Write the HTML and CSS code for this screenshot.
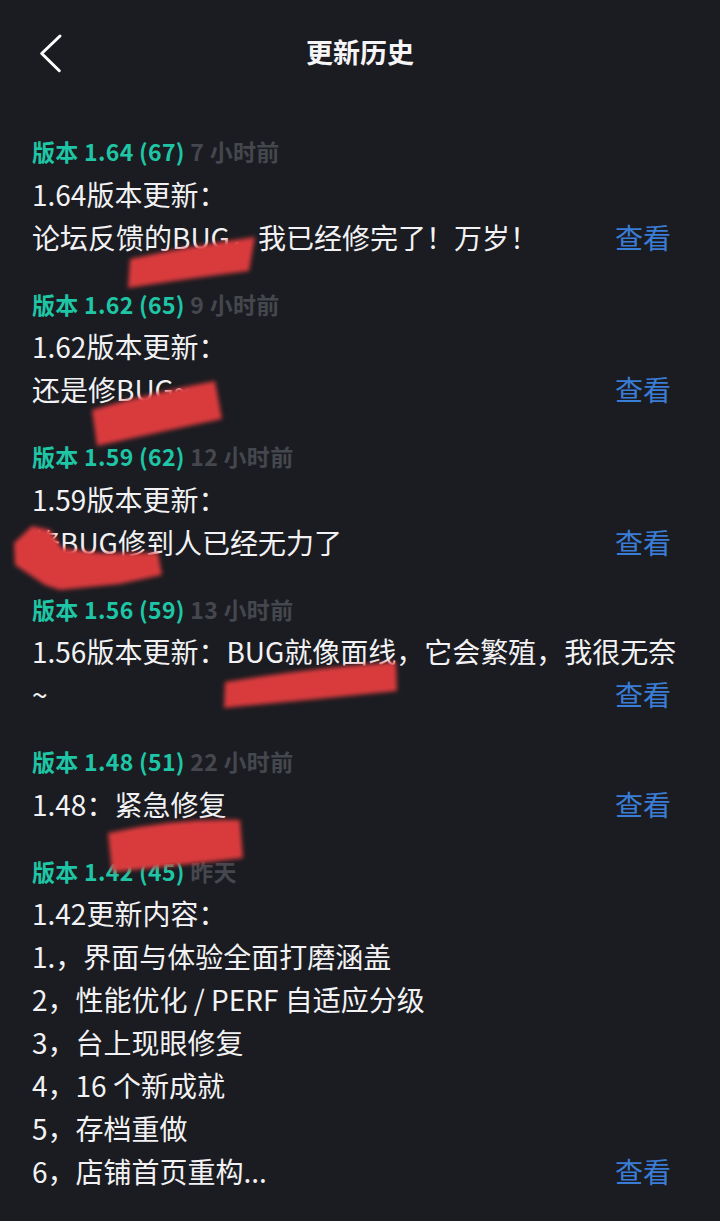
FILE: index.html
```html
<!DOCTYPE html>
<html lang="zh-CN">
<head>
<meta charset="utf-8">
<title>更新历史</title>
<link rel="stylesheet" href="styles.css">
</head>
<body>
<div class="page">
  <header class="topbar">
    <button class="back" aria-label="返回">
      <svg width="28" height="44" viewBox="0 0 28 44"><path d="M24 6 L5.7 23.5 L23.3 40.7" fill="none" stroke="#ffffff" stroke-width="3" stroke-linecap="round" stroke-linejoin="round"/></svg>
    </button>
    <h1 class="title">更新历史</h1>
    <span></span>
  </header>

  <main class="list">
    <section class="entry">
      <div class="entry-head"><span class="ver">版本 1.64 (67)</span> <span class="time">7 小时前</span></div>
      <div class="entry-body">1.64版本更新：<br>论坛反馈的BUG，我已经修完了！万岁！<a class="view">查看</a></div>
    </section>
    <section class="entry">
      <div class="entry-head"><span class="ver">版本 1.62 (65)</span> <span class="time">9 小时前</span></div>
      <div class="entry-body">1.62版本更新：<br>还是修BUG~<a class="view">查看</a></div>
    </section>
    <section class="entry">
      <div class="entry-head"><span class="ver">版本 1.59 (62)</span> <span class="time">12 小时前</span></div>
      <div class="entry-body">1.59版本更新：<br>修BUG修到人已经无力了<a class="view">查看</a></div>
    </section>
    <section class="entry">
      <div class="entry-head"><span class="ver">版本 1.56 (59)</span> <span class="time">13 小时前</span></div>
      <div class="entry-body">1.56版本更新：BUG就像面线，它会繁殖，我很无奈~<a class="view">查看</a></div>
    </section>
    <section class="entry">
      <div class="entry-head"><span class="ver">版本 1.48 (51)</span> <span class="time">22 小时前</span></div>
      <div class="entry-body">1.48：紧急修复<a class="view">查看</a></div>
    </section>
    <section class="entry">
      <div class="entry-head"><span class="ver">版本 1.42 (45)</span> <span class="time">昨天</span></div>
      <div class="entry-body">1.42更新内容：<br>1.，界面与体验全面打磨涵盖<br>2，性能优化 / PERF 自适应分级<br>3，台上现眼修复<br>4，16 个新成就<br>5，存档重做<br>6，店铺首页重构...<a class="view">查看</a></div>
    </section>
  </main>

  <svg class="redactions" width="720" height="1221" viewBox="0 0 720 1221" aria-hidden="true">
    <defs><filter id="soft" x="-10%" y="-30%" width="120%" height="160%"><feGaussianBlur stdDeviation="2.2"/></filter></defs>
    <g fill="#d93b3c" filter="url(#soft)">
      <path d="M130 259 Q190 246 255 237 L249 271 Q185 279 128 288 Z"/>
      <path d="M92 410 Q150 393 215 381 L222 419 Q160 432 97 446 Z"/>
      <path d="M14 543 L32 526 L50 530 L62 548 L100 553 L158 553 L162 575 L120 584 L60 590 L45 585 L15 565 Z"/>
      <path d="M225 682 Q310 668 396 662 L397 691 Q310 700 224 708 Z"/>
      <path d="M108 833 Q175 818 240 820 L243 858 Q175 866 112 872 Z"/>
    </g>
  </svg>
</div>
</body>
</html>
```

FILE: styles.css
```css
html, body {
  margin: 0;
  padding: 0;
  background: #1b1c21;
}

body {
  font-family: "Noto Sans CJK SC", "Noto Sans", sans-serif;
  color: #f2f2f4;
}

.page {
  position: relative;
  width: 720px;
  min-height: 1221px;
  overflow: hidden;
}

.topbar {
  height: 104px;
  display: grid;
  grid-template-columns: 1fr auto 1fr;
  align-items: center;
}

.back {
  justify-self: start;
  margin-left: 36px;
  padding: 0;
  border: 0;
  background: none;
  display: flex;
  width: 28px;
  height: 44px;
}

.title {
  margin: 0;
  font-size: 27px;
  font-weight: 700;
  color: #f5f5f7;
  line-height: 40px;
}

.list {
  padding: 26px 40px 0 32px;
}

.entry {
  padding-bottom: 24px;
}

.entry-head {
  font-size: 23px;
  font-weight: 700;
  line-height: 42.5px;
  letter-spacing: 0.3px;
}

.ver {
  color: #1ec6a6;
}

.time {
  color: #45474e;
}

.entry-body {
  font-size: 28px;
  line-height: 43px;
  color: #f2f2f4;
}

.view {
  float: right;
  margin-right: 9px;
  color: #3a7dd6;
  cursor: pointer;
}

.redactions {
  position: absolute;
  top: 0;
  left: 0;
  pointer-events: none;
}
```
